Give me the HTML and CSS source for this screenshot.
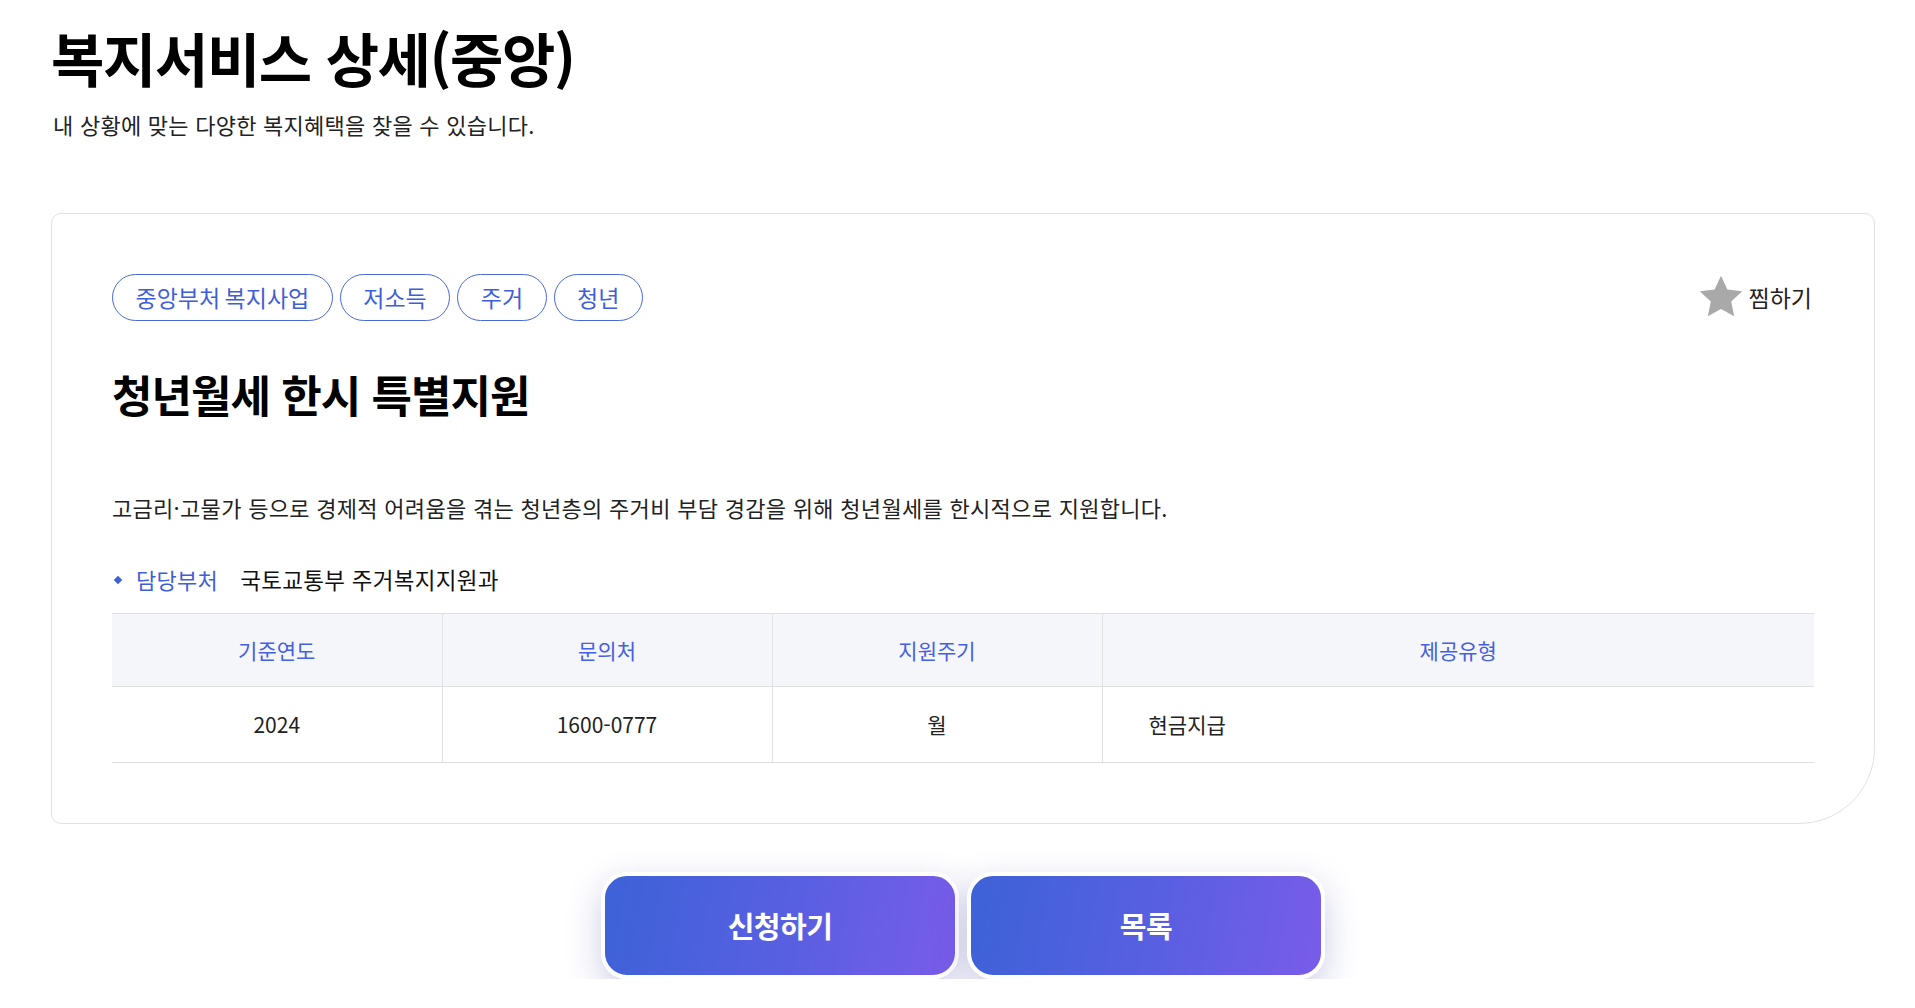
FILE: index.html
```html
<!DOCTYPE html>
<html lang="ko">
<head>
    <meta charset="UTF-8">
    <meta name="viewport" content="width=device-width, initial-scale=1.0">
    <title>복지서비스 상세(중앙)</title>
    <link rel="stylesheet" href="styles.css">
</head>
<body>
    <div class="page">
        <header class="page-head">
            <h1>복지서비스 상세(중앙)</h1>
            <p class="page-desc">내 상황에 맞는 다양한 복지혜택을 찾을 수 있습니다.</p>
        </header>

        <section class="card">
            <div class="card-top">
                <ul class="tags">
                    <li class="tag">중앙부처 복지사업</li>
                    <li class="tag">저소득</li>
                    <li class="tag">주거</li>
                    <li class="tag">청년</li>
                </ul>
                <button class="bookmark" type="button">
                    <svg class="star" width="50" height="50" viewBox="0 0 24 24" aria-hidden="true">
                        <path d="M12 1.8l3.05 6.6 7.15.85-5.3 4.9 1.42 7.1L12 17.7l-6.32 3.55 1.42-7.1-5.3-4.9 7.15-.85z"/>
                    </svg>
                    <span>찜하기</span>
                </button>
            </div>

            <h2 class="service-name">청년월세 한시 특별지원</h2>
            <p class="service-desc">고금리·고물가 등으로 경제적 어려움을 겪는 청년층의 주거비 부담 경감을 위해 청년월세를 한시적으로 지원합니다.</p>

            <div class="dept">
                <span class="dept-label">담당부처</span>
                <span class="dept-value">국토교통부 주거복지지원과</span>
            </div>

            <table class="info-table">
                <colgroup>
                    <col class="col-fixed">
                    <col class="col-fixed">
                    <col class="col-fixed">
                    <col>
                </colgroup>
                <thead>
                    <tr>
                        <th>기준연도</th>
                        <th>문의처</th>
                        <th>지원주기</th>
                        <th>제공유형</th>
                    </tr>
                </thead>
                <tbody>
                    <tr>
                        <td>2024</td>
                        <td>1600-0777</td>
                        <td>월</td>
                        <td class="left">현금지급</td>
                    </tr>
                </tbody>
            </table>
        </section>

        <div class="actions">
            <button class="action-button" type="button">신청하기</button>
            <button class="action-button" type="button">목록</button>
        </div>
    </div>
</body>
</html>
```

FILE: styles.css
```css
body {
    margin: 0;
    padding: 0;
    font-family: "Noto Sans CJK KR", "Noto Sans", sans-serif;
    color: #222;
    background-color: #fff;
}
.page {
    padding: 23px 40px 0 51px;
}
.page-head h1 {
    margin: 0;
    font-size: 58px;
    line-height: 1.2;
    font-weight: 700;
    letter-spacing: -1.4px;
    color: #000;
}
.page-desc {
    margin: 16px 0 0 2px;
    font-size: 22px;
    line-height: 31px;
    letter-spacing: 0.25px;
    color: #222;
}
.card {
    margin-top: 73px;
    padding: 60px;
    border: 1px solid #e2e2e2;
    border-radius: 10px 10px 76px 10px;
}
.card-top {
    display: flex;
    align-items: center;
    justify-content: space-between;
    height: 47px;
}
.tags {
    display: flex;
    gap: 7px;
    margin: 0;
    padding: 0;
    list-style: none;
}
.tag {
    height: 45px;
    padding: 0 22.5px;
    border: 1px solid #4a68dc;
    border-radius: 24px;
    font-size: 23px;
    line-height: 45px;
    word-spacing: -2px;
    color: #3f5fd8;
}
.bookmark {
    display: flex;
    align-items: center;
    gap: 3px;
    margin-right: 2px;
    padding: 0;
    border: none;
    background: none;
    font-family: inherit;
    font-size: 23px;
    color: #222;
    cursor: pointer;
}
.star {
    fill: #a9a9a9;
    filter: blur(0.5px);
}
.service-name {
    margin: 47px 0 0;
    font-size: 44px;
    line-height: 52px;
    font-weight: 700;
    letter-spacing: -1px;
    color: #000;
}
.service-desc {
    margin: 71px 0 0;
    font-size: 22px;
    line-height: 32px;
    letter-spacing: 0.3px;
    color: #222;
}
.dept {
    display: flex;
    align-items: center;
    margin-top: 40px;
    font-size: 22px;
    line-height: 32px;
    letter-spacing: 0.3px;
}
.dept-label {
    position: relative;
    padding-left: 24px;
    margin-right: 22px;
    color: #3f5fd8;
}
.dept-label::before {
    content: "";
    position: absolute;
    left: 3px;
    top: 14px;
    width: 6px;
    height: 6px;
    background-color: #3f5fd8;
    transform: rotate(45deg);
}
.dept-value {
    font-size: 22.5px;
    color: #111;
}
.info-table {
    width: 100%;
    margin-top: 18px;
    border-collapse: collapse;
    table-layout: fixed;
}
.col-fixed {
    width: 330px;
}
.info-table th,
.info-table td {
    text-align: center;
    font-size: 21px;
    border-top: 1px solid #dedede;
    border-bottom: 1px solid #dedede;
    border-left: 1px solid #e2e2e2;
}
.info-table th:first-child,
.info-table td:first-child {
    border-left: none;
}
.info-table th {
    height: 72px;
    padding: 0;
    font-weight: 400;
    color: #4560e0;
    background-color: #f5f6fa;
}
.info-table td {
    height: 75px;
    padding: 0;
    color: #222;
}
.info-table td.left {
    text-align: left;
    padding-left: 46px;
}
.actions {
    display: flex;
    justify-content: center;
    gap: 8px;
    margin-top: 48px;
}
.action-button {
    box-sizing: border-box;
    width: 358px;
    height: 107px;
    border: 4px solid #fff;
    border-radius: 26px;
    background: linear-gradient(100deg, #3d62d7 0%, #5a5fe2 55%, #795ce9 100%);
    box-shadow: 0 12px 34px rgba(60, 60, 160, 0.25);
    font-family: inherit;
    font-size: 29px;
    font-weight: 700;
    letter-spacing: -0.5px;
    color: #fff;
    cursor: pointer;
}
```
